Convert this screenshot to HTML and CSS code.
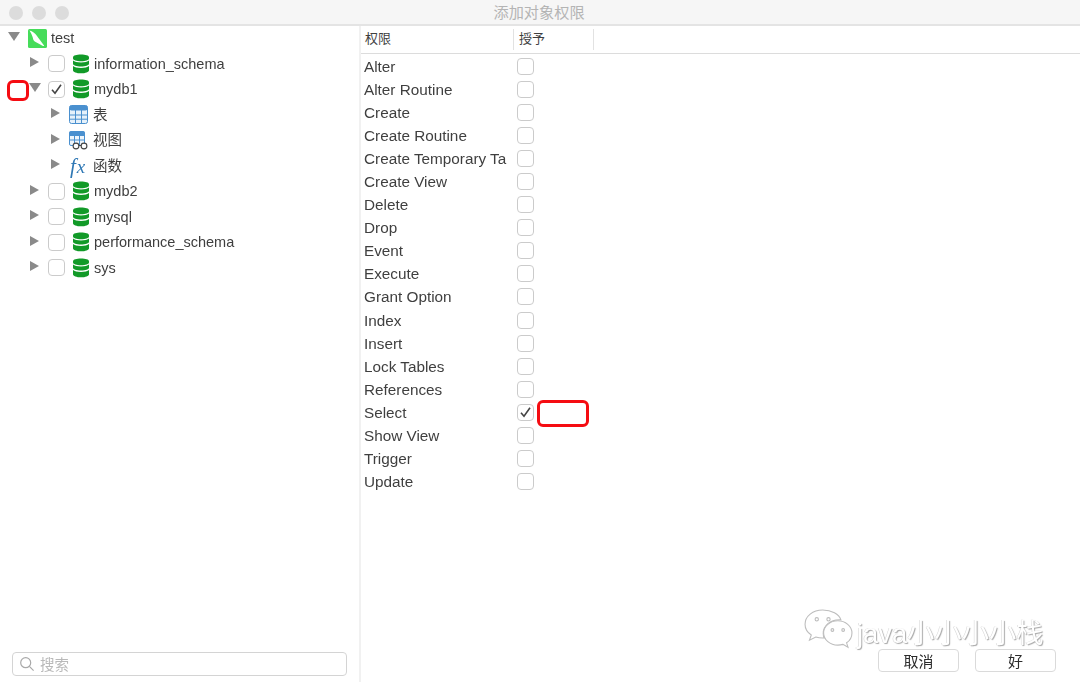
FILE: index.html
```html
<!DOCTYPE html>
<html lang="zh">
<head>
<meta charset="utf-8">
<title>添加对象权限</title>
<link rel="stylesheet" href="styles.css">
</head>
<body>
<svg class="defs" width="0" height="0" aria-hidden="true">
  <defs>
    <symbol id="db" viewBox="0 0 18 20">
      <path d="M1 3.2C1 1.400 4.600.4 9 .4s8 1 8 2.800v1.300c0 1.700-3.600 2.700-8 2.700S1 6.200 1 4.500z" fill="#129a28"/>
      <path d="M1 6.600c1.300 1.300 4.400 2 8 2s6.700-.7 8-2v3.200c0 1.700-3.600 2.700-8 2.700s-8-1-8-2.700z" fill="#129a28"/>
      <path d="M1 11.900c1.300 1.300 4.400 2 8 2s6.700-.7 8-2v4.300c0 1.900-3.600 3.100-8 3.100s-8-1.200-8-3.100z" fill="#129a28"/>
    </symbol>
    <symbol id="check" viewBox="0 0 16 16">
      <path d="M3.200 8.300l3.200 3.700L12.800 3" fill="none" stroke="#444" stroke-width="1.700"/>
    </symbol>
  </defs>
</svg>
<div class="window">
  <header class="titlebar">
    <div class="lights"><i></i><i></i><i></i></div>
    <div class="title">添加对象权限</div>
  </header>
  <main class="split">
    <aside class="side">
      <ul class="tree">
        <li class="row l0"><span class="tri down"></span>
          <svg class="conn" viewBox="0 0 19 19"><rect width="19" height="19" rx="1.500" fill="#46dc5a"/><path d="M1.500 1.500c3 .6 5.500 2.600 7.500 5.500 1.800 2.600 3.800 5 7 9.500.3.500-.5.700-1 .4-2-1-3.500-2.200-5.500-3-1.200-.5-2.500-1-3.500-2.200-.8-1-1-2.500-1.500-4C3.800 5.500 2.800 3.500 1.500 1.500z" fill="#fff"/></svg>
          <span class="lbl">test</span></li>
        <li class="row l1"><span class="tri"></span><span class="cb"></span><svg class="db"><use href="#db"/></svg><span class="lbl">information_schema</span></li>
        <li class="row l1"><span class="tri down"></span><span class="cb"><svg class="ck"><use href="#check"/></svg></span><svg class="db"><use href="#db"/></svg><span class="lbl">mydb1</span></li>
        <li class="row l2"><span class="tri"></span>
          <svg class="ic" viewBox="0 0 19 19"><rect x=".5" y=".5" width="18" height="18" rx="2" fill="#e6f1fa" stroke="#4a90cf"/><rect x=".5" y=".5" width="18" height="5" rx="2" fill="#4a90cf"/><path d="M1 10h17M1 14.200h17M6.500 5v13M12.500 5v13" stroke="#4a90cf" fill="none"/></svg>
          <span class="lbl zh">表</span></li>
        <li class="row l2"><span class="tri"></span>
          <svg class="ic" viewBox="0 0 19 19"><rect x=".5" y=".5" width="15" height="14" rx="1.500" fill="#eef5fb" stroke="#4a90cf"/><rect x=".5" y=".5" width="15" height="4.500" fill="#4a90cf"/><path d="M1 9h14M5.500 5v9M10.500 5v9" stroke="#4a90cf" fill="none"/><circle cx="7" cy="15" r="2.900" fill="#fff" stroke="#444" stroke-width="1.100"/><circle cx="15" cy="15" r="2.900" fill="#fff" stroke="#444" stroke-width="1.100"/><path d="M9.900 14.500h2.200" stroke="#444"/></svg>
          <span class="lbl zh">视图</span></li>
        <li class="row l2"><span class="tri"></span>
          <span class="fx"><i>f</i><i class="fxx">x</i></span>
          <span class="lbl zh">函数</span></li>
        <li class="row l1"><span class="tri"></span><span class="cb"></span><svg class="db"><use href="#db"/></svg><span class="lbl">mydb2</span></li>
        <li class="row l1"><span class="tri"></span><span class="cb"></span><svg class="db"><use href="#db"/></svg><span class="lbl">mysql</span></li>
        <li class="row l1"><span class="tri"></span><span class="cb"></span><svg class="db"><use href="#db"/></svg><span class="lbl">performance_schema</span></li>
        <li class="row l1"><span class="tri"></span><span class="cb"></span><svg class="db"><use href="#db"/></svg><span class="lbl">sys</span></li>
      </ul>
      <div class="search">
        <svg class="mag" viewBox="0 0 16 16"><circle cx="6.700" cy="6.700" r="5" fill="none" stroke="#a9a9a9" stroke-width="1.200"/><path d="M10.400 10.400l4.200 4.200" stroke="#a9a9a9" stroke-width="1.200"/></svg>
        <span class="hint">搜索</span>
      </div>
    </aside>
    <section class="main">
      <div class="thead"><div class="th c1">权限</div><div class="th c2">授予</div></div>
      <div class="perms">
        <div class="prow"><span class="pn">Alter</span><span class="cb"></span></div>
        <div class="prow"><span class="pn">Alter Routine</span><span class="cb"></span></div>
        <div class="prow"><span class="pn">Create</span><span class="cb"></span></div>
        <div class="prow"><span class="pn">Create Routine</span><span class="cb"></span></div>
        <div class="prow"><span class="pn">Create Temporary Ta</span><span class="cb"></span></div>
        <div class="prow"><span class="pn">Create View</span><span class="cb"></span></div>
        <div class="prow"><span class="pn">Delete</span><span class="cb"></span></div>
        <div class="prow"><span class="pn">Drop</span><span class="cb"></span></div>
        <div class="prow"><span class="pn">Event</span><span class="cb"></span></div>
        <div class="prow"><span class="pn">Execute</span><span class="cb"></span></div>
        <div class="prow"><span class="pn">Grant Option</span><span class="cb"></span></div>
        <div class="prow"><span class="pn">Index</span><span class="cb"></span></div>
        <div class="prow"><span class="pn">Insert</span><span class="cb"></span></div>
        <div class="prow"><span class="pn">Lock Tables</span><span class="cb"></span></div>
        <div class="prow"><span class="pn">References</span><span class="cb"></span></div>
        <div class="prow"><span class="pn">Select</span><span class="cb"><svg class="ck"><use href="#check"/></svg></span></div>
        <div class="prow"><span class="pn">Show View</span><span class="cb"></span></div>
        <div class="prow"><span class="pn">Trigger</span><span class="cb"></span></div>
        <div class="prow"><span class="pn">Update</span><span class="cb"></span></div>
      </div>
      <div class="btns"><button class="btn">取消</button><button class="btn">好</button></div>
    </section>
  </main>
  <div class="mark mark-a"></div>
  <div class="mark mark-b"></div>
  <div class="wm">
    <svg class="wechat" viewBox="0 0 50 44" fill="#fff" stroke="#bdbdbd" stroke-width="1.100">
      <path d="M19 1C9 1 1 7.300 1 15.500c0 4.600 2.500 8.500 6.400 11.100L5.500 32l6.500-3.300c2.200.6 4.500.9 7 .9h1.500c-.6-1.500-.9-3-.9-4.600C19.600 17 26.800 11 36 11c.6 0 1.200 0 1.700.1C35.800 5 28.200 1 19 1z"/>
      <path d="M49 24.500C49 17.600 42.300 12 34.500 12S20 17.600 20 24.500 26.700 37 34.500 37c1.900 0 3.700-.3 5.300-.8l5.200 3-1.500-4.600C46.900 32.300 49 28.700 49 24.500z"/>
      <circle cx="13" cy="10.500" r="1.700"/><circle cx="25" cy="10.500" r="1.700"/><circle cx="29" cy="21.500" r="1.400"/><circle cx="40" cy="21.500" r="1.400"/>
    </svg>
    <span class="wmt">java小小小小栈</span>
  </div>
</div>
</body>
</html>
```

FILE: styles.css
```css
* { box-sizing: border-box; }
html, body { margin: 0; padding: 0; height: 100%; }
body { background: #fff; font-family: "Liberation Sans", "Noto Sans CJK SC", sans-serif; color: #3a3a3a; overflow: hidden; }
.defs { position: absolute; }
.window { position: relative; width: 1080px; height: 682px; display: flex; flex-direction: column; filter: blur(0.35px); }

.titlebar { position: relative; height: 26px; flex: none; background: #f6f6f6; border-bottom: 2px solid #e4e4e4; display: flex; align-items: center; justify-content: center; }
.lights { position: absolute; left: 9px; top: 6px; display: flex; gap: 9px; }
.lights i { width: 14px; height: 14px; border-radius: 50%; background: #dcdcdc; }
.title { font-size: 15.200px; color: #b4b4b4; margin-top: -3px; margin-left: -2px; }

.split { flex: 1; display: flex; min-height: 0; }
.side { width: 361px; flex: none; border-right: 2px solid #f1f1f1; display: flex; flex-direction: column; }
.tree { list-style: none; margin: -0.500px 0 0; padding: 0; flex: 1; }
.row { display: flex; align-items: center; height: 25.500px; font-size: 14.500px; }
.l0 { padding-left: 9px; }
.l1 { padding-left: 30px; }
.l2 { padding-left: 51px; }

.tri { width: 0; height: 0; flex: none; border-style: solid; border-width: 5px 0 5px 9px; border-color: transparent transparent transparent #8a8a8a; margin-top: -3px; }
.tri.down { border-width: 9px 6px 0 6px; border-color: #8a8a8a transparent transparent transparent; margin-top: -4px; margin-left: -1px; margin-right: -2px;}
.conn { width: 19px; height: 19px; margin-left: 10px; margin-right: 4px; flex: none; }
.l1 .cb { margin-left: 9px; }
.db { width: 18px; height: 20px; margin-left: 7px; margin-right: 4px; flex: none; }
.ic { width: 19px; height: 19px; margin-left: 9px; margin-right: 5px; flex: none; }
.fx { width: 19px; margin-left: 10px; margin-right: 4px; padding-top: 2px; flex: none; font-family: "Liberation Serif", serif; color: #2f78b5; font-size: 21px; line-height: 19px; white-space: nowrap; }
.fx i { font-style: italic; }
.fxx { margin-left: 1px; font-size: 19px; }
.lbl { color: #3f3f3f; white-space: nowrap; }
.zh { margin-top: -3px; }

.cb { width: 17px; height: 17px; flex: none; display: flex; align-items: center; justify-content: center; background: #fff; border: 1px solid #cbcbcb; border-radius: 4px; }
.ck { width: 15px; height: 15px; }

.search { height: 24px; margin: 0 12px 6px; border: 1px solid #d4d4d4; border-radius: 4px; display: flex; align-items: center; padding-left: 6px; gap: 5px; font-size: 14.500px; color: #b9b9b9; }
.hint { margin-top: -2px; }
.mag { width: 16px; height: 16px; }

.main { flex: 1; min-width: 0; position: relative; display: flex; flex-direction: column; }
.thead { height: 28px; flex: none; border-bottom: 1px solid #dcdcdc; display: flex; align-items: center; font-size: 13px; color: #3f3f3f; background: #fff; }
.th { height: 21px; display: flex; align-items: center; border-right: 1px solid #e2e2e2; padding-left: 4px; padding-bottom: 4px; }
.c1 { width: 153px; }
.c2 { width: 80px; padding-left: 5px; }

.perms { flex: 1; padding-top: 0.500px; }
.prow { height: 23.100px; display: flex; align-items: center; font-size: 15.300px; }
.pn { width: 150px; margin-left: 3px; margin-right: 3px; padding-top: 1px; overflow: hidden; white-space: nowrap; color: #3f3f3f; }

.btns { display: flex; gap: 16px; justify-content: flex-end; padding: 0 24px 10px 0; }
.btn { width: 81px; height: 23px; padding: 0 0 3px; background: #fff; border: 1px solid #dadada; border-radius: 4px; font: inherit; font-size: 15px; color: #2c2c2c; }

.mark { position: absolute; border: 3px solid #f50c12; border-radius: 6px; }
.mark-a { left: 7px; top: 80px; width: 22px; height: 21px; }
.mark-b { left: 537px; top: 400px; width: 52px; height: 27px; }

.wm { position: absolute; left: 804px; top: 609px; display: flex; align-items: center; gap: 4px; }
.wechat { width: 49px; height: 43px; }
.wmt { font-size: 27.300px; color: #fff; text-shadow: 1px 1px 1px #a8a8a8, -0.500px -0.500px 0 #d4d4d4; }
```
